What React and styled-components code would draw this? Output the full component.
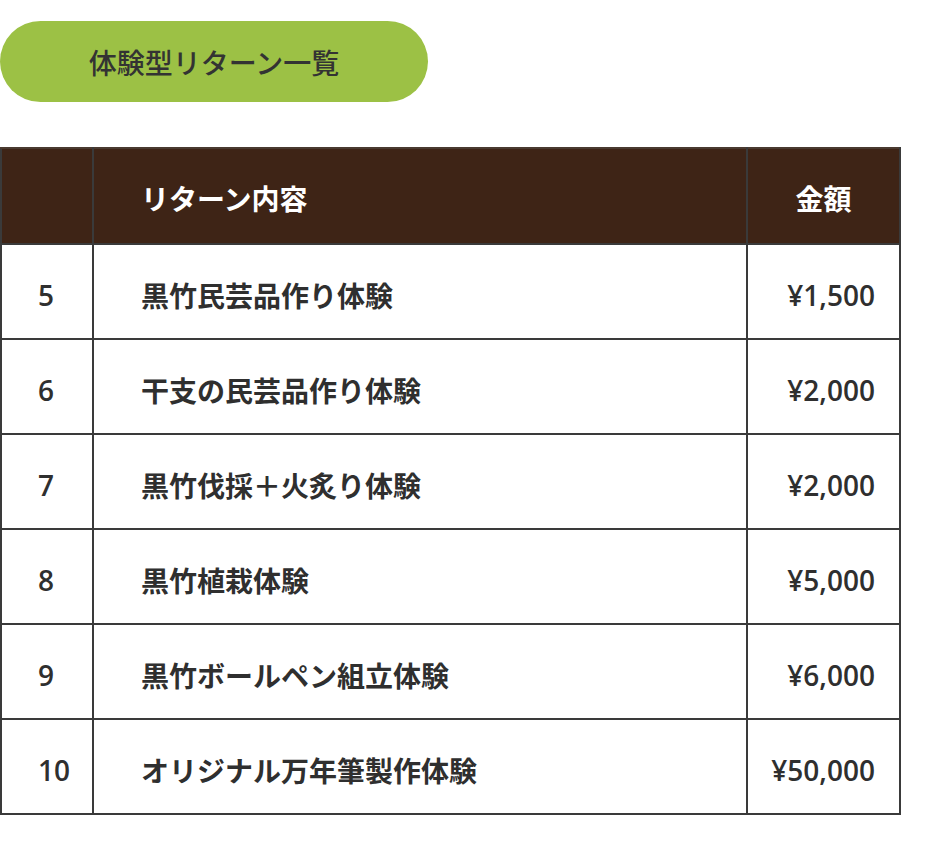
import React from "react";
import styled, { createGlobalStyle } from "styled-components";

const Global = createGlobalStyle`
  html, body { margin: 0; padding: 0; background: #ffffff; }
  body { font-family: "Open Sans", "Noto Sans CJK JP", sans-serif; color: #2f2f2f; }
`;

const Page = styled.div`
  width: 927px;
  padding-top: 21px;
`;

const Pill = styled.div`
  width: 428px;
  height: 81px;
  border-radius: 41px;
  background: #9cc145;
  display: flex;
  align-items: center;
  justify-content: center;
  font-family: "Noto Sans CJK JP", sans-serif;
  font-weight: 500;
  font-size: 28px;
  line-height: 1;
  color: #333333;
`;

const Table = styled.table`
  margin-top: 45px;
  width: 899px;
  border-collapse: collapse;
  table-layout: fixed;
`;

const HeadCell = styled.th`
  height: 88px;
  background: #3e2416;
  color: #ffffff;
  font-family: "Noto Sans CJK JP", sans-serif;
  font-weight: 700;
  font-size: 28px;
  line-height: 1.2;
  text-align: ${(p) => p.$align || "left"};
  padding: 6px 0 0 ${(p) => p.$pl || 0}px;
  border-top: 2px solid #4a3a30;
  border-left: 2px solid ${(p) => p.$lineColor || "#3a3a3a"};
  border-right: 2px solid #3a3a3a;
  border-bottom: 2px solid #3a3a3a;
`;

const Cell = styled.td`
  height: 85px;
  border: 2px solid #3a3a3a;
  font-family: ${(p) =>
    p.$num ? `"Open Sans", "Noto Sans CJK JP", sans-serif` : `"Noto Sans CJK JP", sans-serif`};
  font-weight: ${(p) => (p.$num ? 600 : 700)};
  font-size: 28px;
  line-height: 1.2;
  color: #2f2f2f;
  text-align: ${(p) => p.$align || "left"};
  padding: 8px ${(p) => p.$pr || 0}px 0 ${(p) => p.$pl || 0}px;
  vertical-align: middle;
`;

const rows = [
  ["5", "黒竹民芸品作り体験", "¥1,500"],
  ["6", "干支の民芸品作り体験", "¥2,000"],
  ["7", "黒竹伐採＋火炙り体験", "¥2,000"],
  ["8", "黒竹植栽体験", "¥5,000"],
  ["9", "黒竹ボールペン組立体験", "¥6,000"],
  ["10", "オリジナル万年筆製作体験", "¥50,000"],
];

export default function App() {
  return (
    <Page>
      <Global />
      <Pill>体験型リターン一覧</Pill>
      <Table>
        <colgroup>
          <col style={{ width: 92 }} />
          <col style={{ width: 654 }} />
          <col style={{ width: 153 }} />
        </colgroup>
        <thead>
          <tr>
            <HeadCell />
            <HeadCell $pl={47}>リターン内容</HeadCell>
            <HeadCell $align="center" $lineColor="#ffffff">金額</HeadCell>
          </tr>
        </thead>
        <tbody>
          {rows.map(([n, name, price]) => (
            <tr key={n}>
              <Cell $num $pl={36}>{n}</Cell>
              <Cell $pl={47}>{name}</Cell>
              <Cell $num $align="right" $pr={24}>{price}</Cell>
            </tr>
          ))}
        </tbody>
      </Table>
    </Page>
  );
}
